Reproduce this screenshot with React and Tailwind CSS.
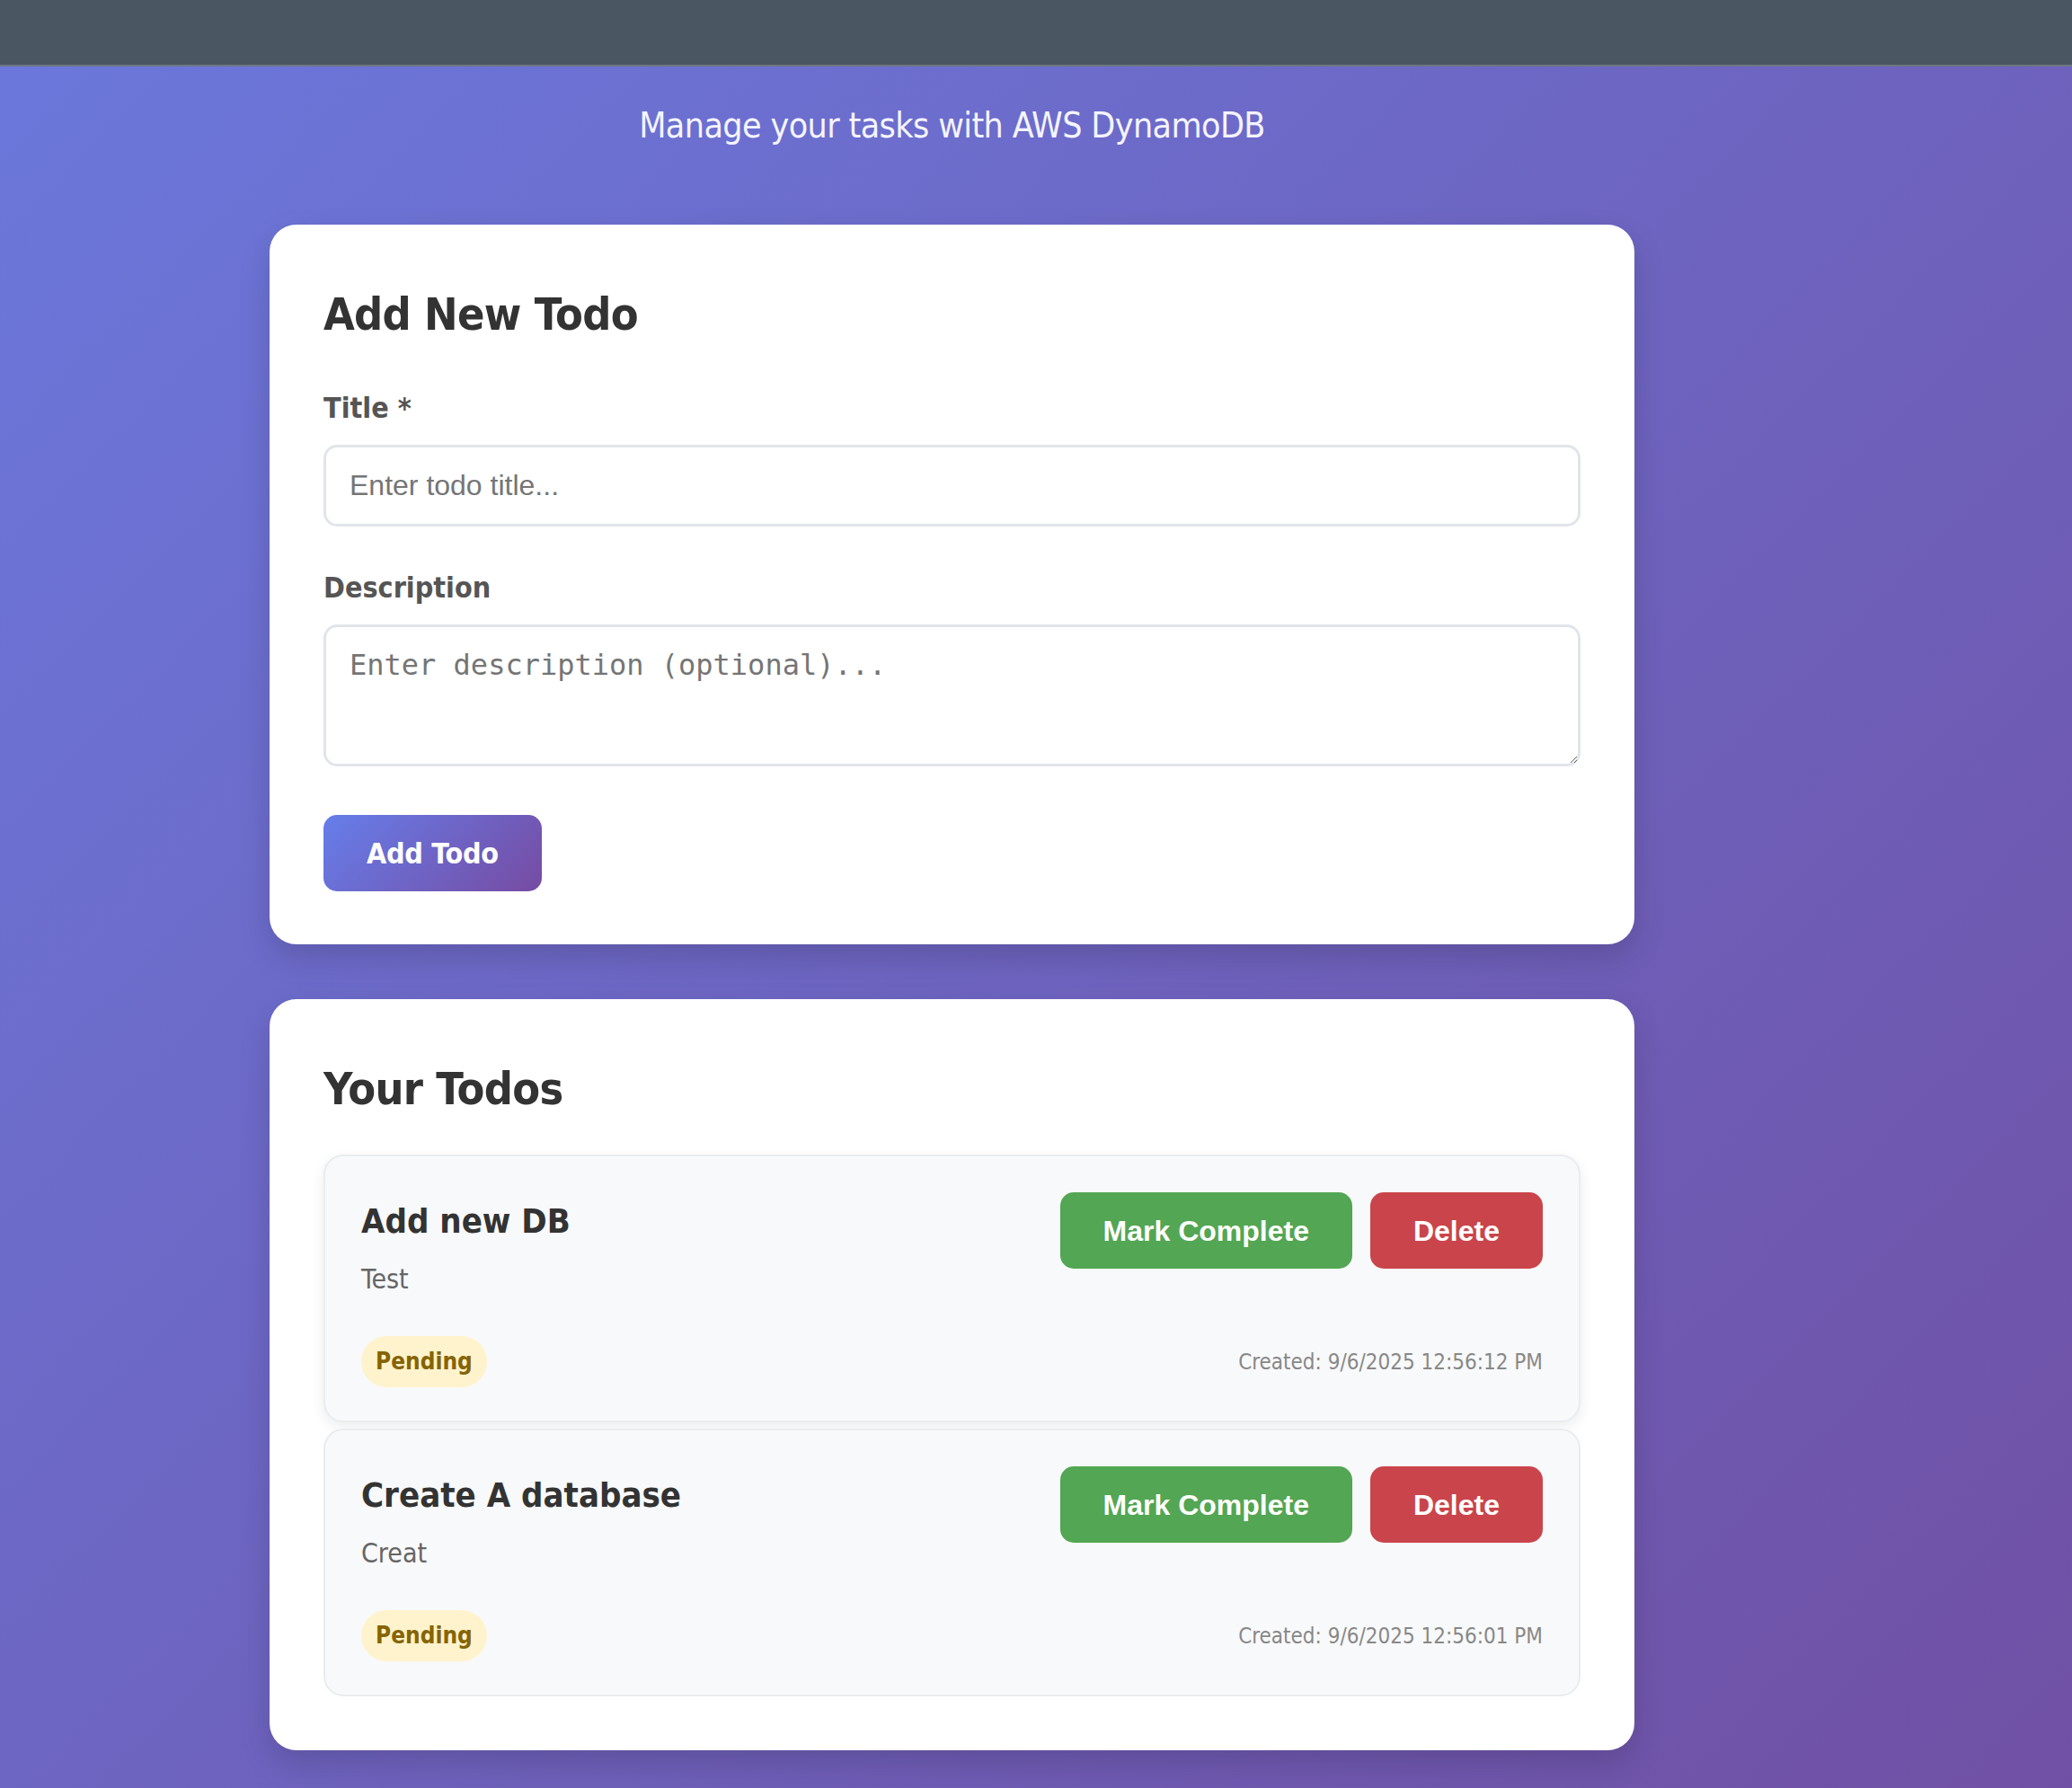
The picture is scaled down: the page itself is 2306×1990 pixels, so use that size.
export default function App() {
  const todos = [
    { title: "Add new DB", desc: "Test", created: "9/6/2025 12:56:12 PM", hover: true },
    { title: "Create A database", desc: "Creat", created: "9/6/2025 12:56:01 PM", hover: false },
  ];

  return (
    <div className="min-h-screen bg-[linear-gradient(135deg,#6b78dc_0%,#7050a4_100%)] font-['DejaVu_Sans_Condensed','DejaVu_Sans',sans-serif] font-stretch-condensed">
      <div className="h-[74px] bg-[#4a5661] border-b-2 border-[#6e7780]" />
      <div className="ml-[300px] w-[1519px] pb-[60px]">
        <p className="mt-[42px] text-center text-[39px] leading-[48px] tracking-[-0.6px] text-[#f4f4ff]">
          Manage your tasks with AWS DynamoDB
        </p>

        <section className="mt-[86px] bg-white rounded-[30px] px-[60px] pt-[60px] pb-[59px] shadow-[0_15px_35px_rgba(0,0,0,0.15)]">
          <h2 className="text-[50px] leading-[80px] tracking-[-0.7px] font-bold text-[#333333]">Add New Todo</h2>
          <label className="block mt-[44px] text-[32px] leading-[40px] font-bold text-[#555555]">Title *</label>
          <input
            className="mt-[21px] block w-full h-[91px] border-[3px] border-[#e1e5ea] rounded-[15px] px-[26px] text-[32px] font-['Liberation_Sans',Arial,sans-serif] font-stretch-normal text-[#333] placeholder:text-[#757575] outline-none"
            placeholder="Enter todo title..."
          />
          <label className="block mt-[48px] text-[32px] leading-[40px] font-bold text-[#555555]">Description</label>
          <textarea
            className="mt-[21px] block w-full h-[158px] border-[3px] border-[#e1e5ea] rounded-[15px] pt-[24px] px-[26px] text-[32px] leading-[37px] font-['DejaVu_Sans_Mono',monospace] font-stretch-normal text-[#333] placeholder:text-[#757575] outline-none"
            placeholder="Enter description (optional)..."
          />
          <button className="mt-[54px] h-[85px] px-[48px] rounded-[15px] bg-[linear-gradient(135deg,#667eea_0%,#764ba2_100%)] text-white text-[32px] tracking-[-0.3px] font-bold">
            Add Todo
          </button>
        </section>

        <section className="mt-[61px] bg-white rounded-[30px] px-[60px] pt-[60px] pb-[60px] shadow-[0_15px_35px_rgba(0,0,0,0.15)]">
          <h2 className="text-[50px] leading-[80px] tracking-[-0.7px] font-bold text-[#333333]">Your Todos</h2>
          <div className="mt-[33px] flex flex-col gap-[7px]">
            {todos.map((t) => (
              <div
                key={t.title}
                className={
                  t.hover
                    ? "border-2 border-[#e9ecef] bg-[#f8f9fa] rounded-[22px] pt-[40px] px-[40px] pb-[37px] shadow-[0_5px_15px_rgba(0,0,0,0.08)]"
                    : "border-2 border-[#e9ecef] bg-[#f8f9fa] rounded-[22px] pt-[40px] px-[40px] pb-[37px]"
                }
              >
                <div className="flex justify-between items-start">
                  <div>
                    <h3 className="mt-[9px] text-[38px] leading-[46px] font-bold text-[#333333]">{t.title}</h3>
                    <p className="mt-[24px] text-[30px] leading-[36px] text-[#666666]">{t.desc}</p>
                  </div>
                  <div className="flex gap-[20px]">
                    <button className="h-[85px] px-[48px] rounded-[15px] bg-[#53a653] text-white text-[32px] font-bold font-['Liberation_Sans',Arial,sans-serif] font-stretch-normal">
                      Mark Complete
                    </button>
                    <button className="h-[85px] px-[48px] rounded-[15px] bg-[#ca444b] text-white text-[32px] font-bold font-['Liberation_Sans',Arial,sans-serif] font-stretch-normal">
                      Delete
                    </button>
                  </div>
                </div>
                <div className="mt-[45px] flex justify-between items-center">
                  <span className="h-[57px] px-[16px] flex items-center rounded-full bg-[#fff3cd] text-[#856404] text-[26px] font-bold">
                    Pending
                  </span>
                  <span className="text-[24px] text-[#888888]">Created: {t.created}</span>
                </div>
              </div>
            ))}
          </div>
        </section>
      </div>
    </div>
  );
}
